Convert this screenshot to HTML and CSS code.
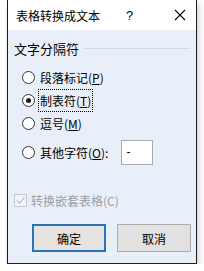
FILE: index.html
```html
<!DOCTYPE html>
<html>
	<head>
		<meta charset="UTF-8">
		<title>表格转换成文本</title>
		<link rel="stylesheet" href="styles.css">
	</head>
	<body>
		<div class="dialog">
			<div class="titlebar">
				<span class="title">表格转换成文本</span>
				<span class="help">?</span>
				<span class="close">
					<svg width="12" height="12" viewBox="0 0 12 12"><path d="M1 1L11 11M11 1L1 11" stroke="#000" stroke-width="1.1" fill="none"/></svg>
				</span>
			</div>
			<div class="panel">
				<div class="group">
					<span>文字分隔符</span>
					<i class="rule"></i>
				</div>
				<div class="options">
					<label class="opt"><i class="radio"></i><span>段落标记(<u>P</u>)</span></label>
					<label class="opt tab"><i class="radio on"></i><span class="focus">制表符(<u>T</u>)</span></label>
					<label class="opt comma"><i class="radio"></i><span>逗号(<u>M</u>)</span></label>
					<label class="opt other"><i class="radio"></i><span>其他字符(<u>O</u>):</span><span class="field">-</span></label>
				</div>
				<label class="check"><i class="box">
					<svg width="12" height="12" viewBox="0 0 12 12"><path d="M2 6.5L5 9.5L10.5 3" stroke="#b5b9bf" stroke-width="1.2" fill="none"/></svg>
				</i><span>转换嵌套表格(C)</span></label>
				<div class="buttons">
					<button class="btn default">确定</button>
					<button class="btn">取消</button>
				</div>
			</div>
		</div>
	</body>
</html>
```
FILE: styles.css
```css
body {
	margin: 0;
	background: #fff;
	font-family: "Noto Sans CJK SC", "Noto Sans", sans-serif;
	color: #000;
}

.dialog {
	width: 188px;
	margin-left: 7px;
	border: 1px solid #1c1c1c;
	border-top: none;
	box-shadow: 2px 3px 6px rgba(0, 0, 0, 0.18);
}

.titlebar {
	height: 30px;
	background: #fff;
	display: flex;
	align-items: center;
	font-size: 12px;
}

.titlebar .title {
	padding-left: 8px;
	width: 110px;
}

.titlebar .help {
	width: 40px;
	font-size: 13px;
	font-family: "Liberation Sans", sans-serif;
}

.titlebar .close {
	display: flex;
	padding-left: 8px;
}

.panel {
	background: #e9eff9;
	padding-top: 10px;
	height: 233px;
	box-sizing: border-box;
	font-size: 12px;
}

.group {
	display: flex;
	align-items: center;
	padding-left: 6px;
	font-size: 13px;
	height: 16px;
}

.group .rule {
	flex: 1;
	height: 1px;
	background: #d3d9e3;
	margin: 1px 6px 0 5px;
}

.options {
	display: flex;
	flex-direction: column;
	padding-left: 14px;
	margin-top: 9px;
}

.opt {
	display: flex;
	align-items: center;
	height: 24px;
}

.opt.tab {
	height: 23px;
}

.opt.comma {
	height: 22px;
}

.opt.other {
	height: 25px;
	margin-top: 6px;
}

.radio {
	width: 11px;
	height: 11px;
	border: 1px solid #333;
	border-radius: 50%;
	background: #fff;
	margin-right: 5px;
	position: relative;
}

.radio.on::after {
	content: "";
	position: absolute;
	left: 3px;
	top: 3px;
	width: 5px;
	height: 5px;
	border-radius: 50%;
	background: #1a1a1a;
}

.focus {
	outline: 1px dotted #000;
	outline-offset: 0;
	padding: 2px 1px;
	margin-left: -1px;
}

.field {
	width: 26px;
	height: 23px;
	border: 1px solid #a6abb3;
	background: #fff;
	margin-left: 13px;
	padding-left: 4px;
	line-height: 22px;
	font-family: "Liberation Sans", sans-serif;
}

.check {
	display: flex;
	align-items: center;
	padding-left: 6px;
	margin-top: 27px;
	color: #9a9ea5;
	height: 16px;
}

.box {
	width: 11px;
	height: 11px;
	border: 1px solid #c4c8ce;
	background: #f3f5f9;
	margin-right: 4px;
	display: flex;
	align-items: center;
	justify-content: center;
}

.buttons {
	display: flex;
	gap: 11px;
	padding-left: 24px;
	margin-top: 16px;
}

.btn {
	width: 74px;
	height: 28px;
	background: #e1e1e1;
	border: 1px solid #adadad;
	font-family: "Noto Sans CJK SC", sans-serif;
	font-size: 12px;
	color: #000;
	padding: 0;
}

.btn.default {
	border: 2px solid #2b72b6;
	background: #e5e2df;
}
```
